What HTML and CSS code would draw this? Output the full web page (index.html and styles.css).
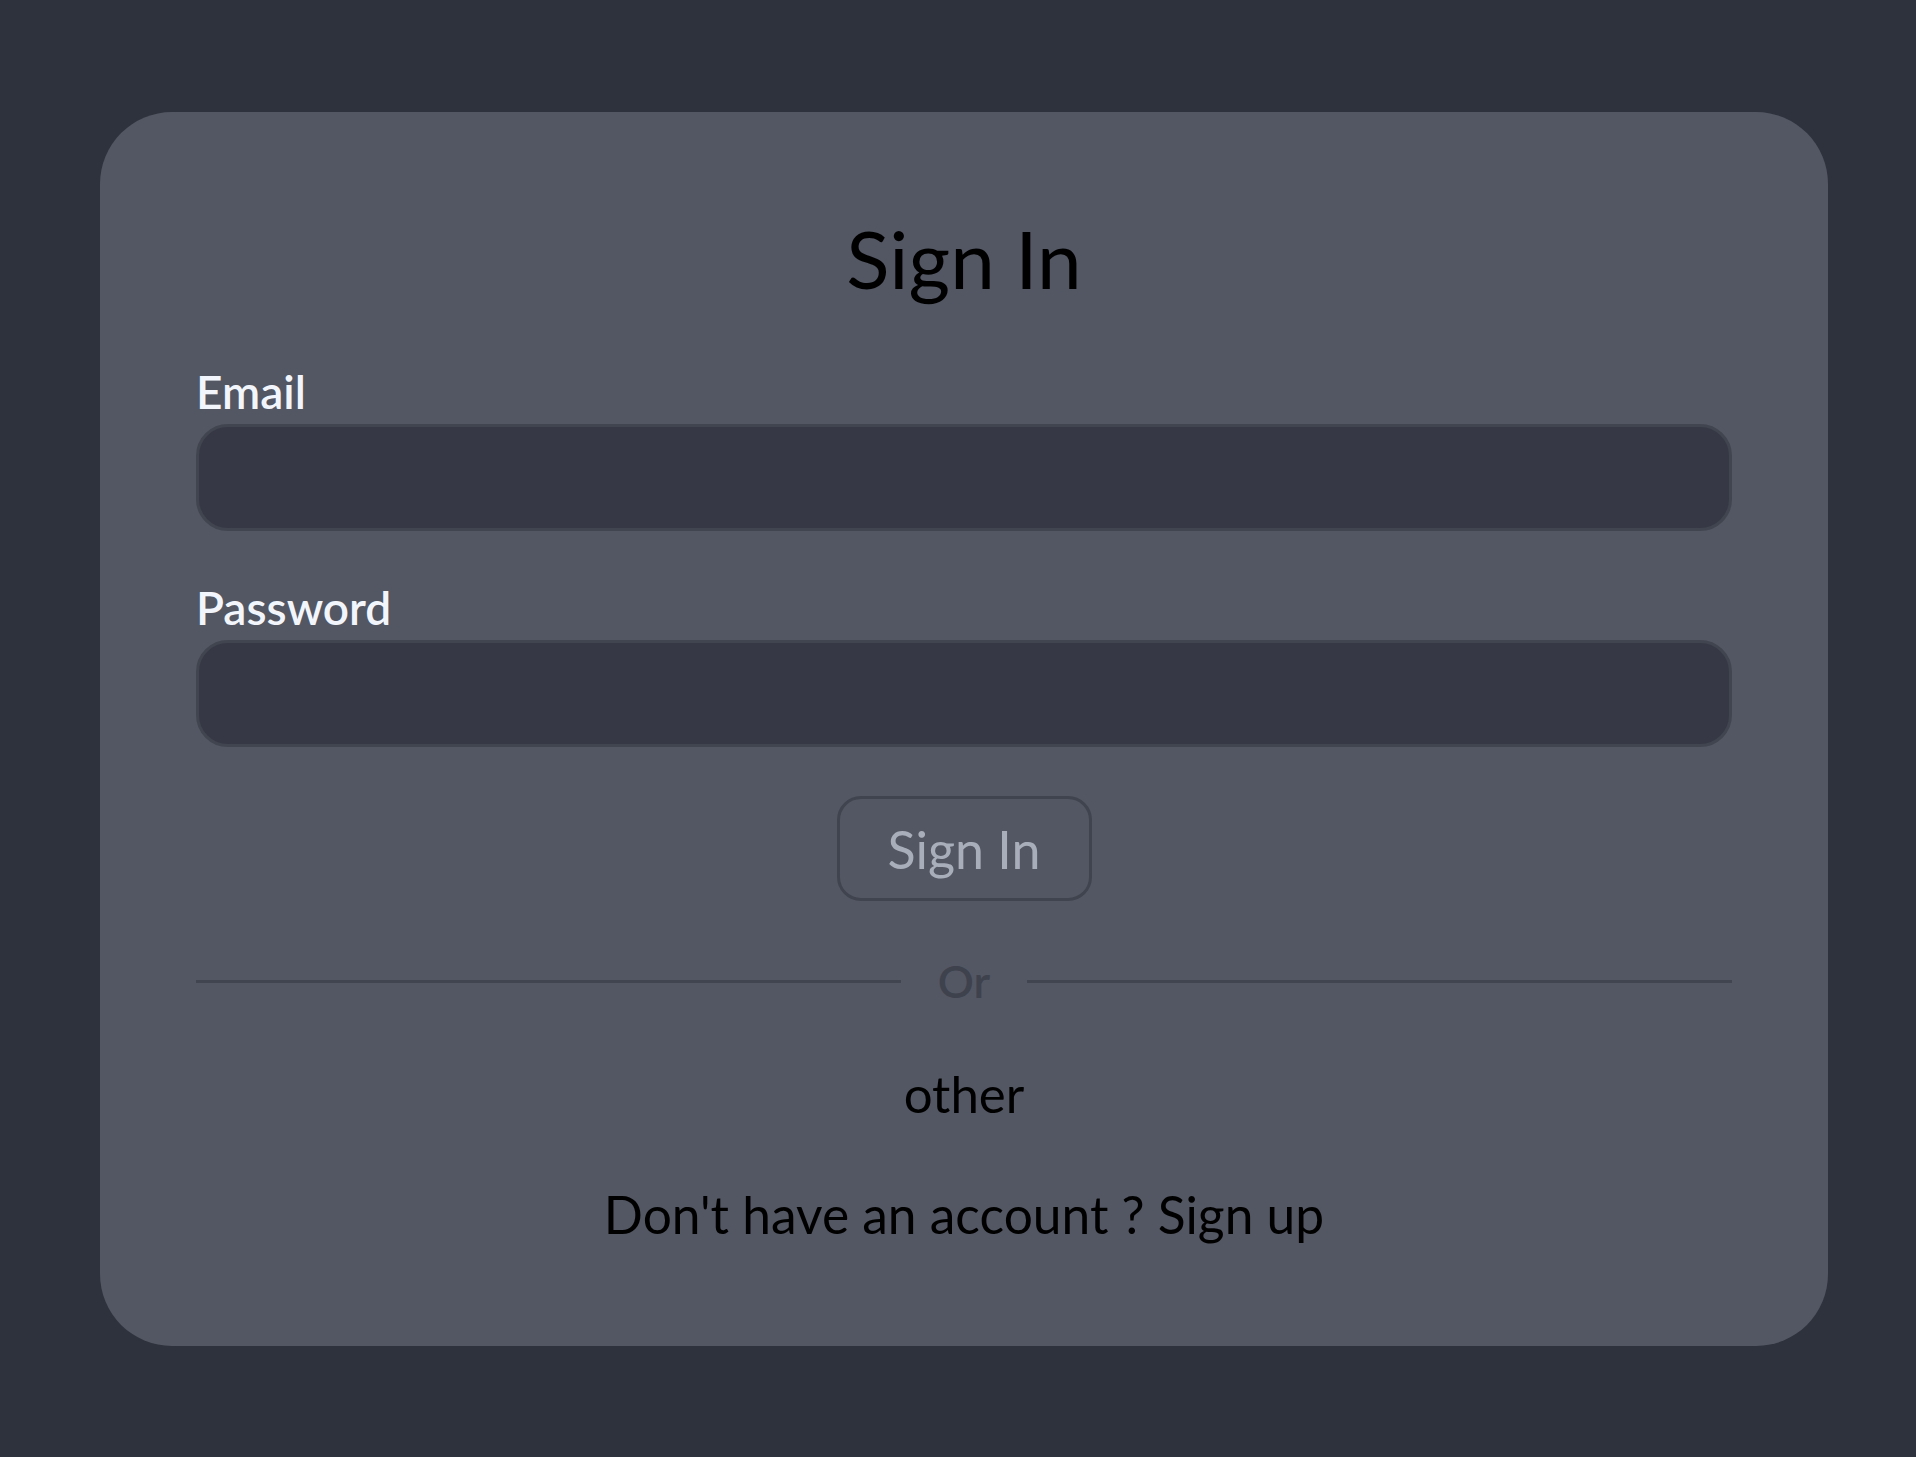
FILE: index.html
```html
<!DOCTYPE html>
<html lang="en">

<head>
    <meta charset="UTF-8">
    <meta name="viewport" content="width=device-width, initial-scale=1.0">
    <title>Sign In</title>
    <link rel="stylesheet" href="styles.css">
</head>

<body>
    <div class="pagina">
        <div class="tarjeta">
            <h1 class="titulo">Sign In</h1>

            <form class="formulario" onsubmit="return false">
                <label class="etiqueta" for="email">Email</label>
                <input class="campo" type="email" id="email">

                <label class="etiqueta etiqueta-pass" for="password">Password</label>
                <input class="campo" type="password" id="password">

                <button class="boton" type="submit">Sign In</button>
            </form>

            <div class="separador">
                <span class="linea"></span>
                <span class="separador-texto">Or</span>
                <span class="linea"></span>
            </div>

            <p class="otro">other</p>
            <p class="registro">Don't have an account ? Sign up</p>
        </div>
    </div>
</body>

</html>
```

FILE: styles.css
```css
* {
    box-sizing: border-box;
    margin: 0;
    padding: 0;
    font-family: Lato, "Noto Sans", sans-serif;
}

body {
    background-color: #2e323d;
}

.pagina {
    padding: 112px 88px 109px 100px;
}

.tarjeta {
    display: flex;
    flex-direction: column;
    align-items: center;
    background-color: #535763;
    border-radius: 72px;
    padding: 106px 96px 105px;
}

.titulo {
    font-size: 80px;
    font-weight: 400;
    line-height: 1;
    color: #000;
}

.formulario {
    display: flex;
    flex-direction: column;
    align-self: stretch;
    margin-top: 71px;
}

.etiqueta {
    font-size: 46px;
    font-weight: 600;
    line-height: 1;
    color: #f2f6fc;
    margin-bottom: 9px;
}

.etiqueta-pass {
    margin-top: 54px;
}

.campo {
    height: 107px;
    background-color: #363945;
    border: 3px solid #41454f;
    border-radius: 32px;
    outline: none;
    color: #fff;
    font-size: 40px;
    padding: 0 32px;
}

.boton {
    align-self: center;
    width: 255px;
    height: 105px;
    margin-top: 49px;
    background-color: transparent;
    border: 3px solid #40444e;
    border-radius: 24px;
    color: #a9aebb;
    font-size: 52px;
    line-height: 1;
    cursor: pointer;
}

.separador {
    display: flex;
    align-items: center;
    align-self: stretch;
    gap: 37px;
    margin-top: 58px;
}

.linea {
    flex: 1;
    height: 3px;
    background-color: #41454f;
}

.separador-texto {
    font-size: 45px;
    font-weight: 600;
    line-height: 1;
    color: #3e424d;
}

.otro {
    font-size: 51px;
    line-height: 1;
    color: #000;
    margin-top: 64px;
}

.registro {
    font-size: 51.5px;
    line-height: 1;
    color: #000;
    margin-top: 70px;
}
```
